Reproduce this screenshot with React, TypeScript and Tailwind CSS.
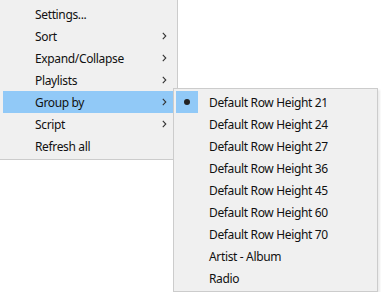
import React from "react";

const Chevron = () => (
  <svg width="5" height="8" viewBox="0 0 5 8" className="block">
    <polyline points="0.8,0.8 3.8,4 0.8,7.2" fill="none" stroke="#333" strokeWidth="1.1" />
  </svg>
);

const mainItems: { label: string; sub?: boolean; active?: boolean }[] = [
  { label: "Settings..." },
  { label: "Sort", sub: true },
  { label: "Expand/Collapse", sub: true },
  { label: "Playlists", sub: true },
  { label: "Group by", sub: true, active: true },
  { label: "Script", sub: true },
  { label: "Refresh all" },
];

const subItems = [
  "Default Row Height 21",
  "Default Row Height 24",
  "Default Row Height 27",
  "Default Row Height 36",
  "Default Row Height 45",
  "Default Row Height 60",
  "Default Row Height 70",
  "Artist - Album",
  "Radio",
];

export default function App() {
  return (
    <div
      className="relative w-[381px] h-[292px] bg-white overflow-hidden text-[12px] tracking-[-0.35px] text-[#111]"
      style={{ fontFamily: '"Segoe UI", "Noto Sans", sans-serif' }}
    >
      <div className="w-[178px] h-[160px] bg-[#f0f0f0] border-r border-b border-[#cccccc] pt-[3px] pl-[3px] pr-[2px] pb-[2px]">
        {mainItems.map((it) => (
          <div
            key={it.label}
            className={`h-[22px] flex items-center pl-[32px] pr-[8px] ${it.active ? "bg-[#91c9f7]" : ""}`}
          >
            <span className="flex-1 leading-none pt-[1px]">{it.label}</span>
            {it.sub && <Chevron />}
          </div>
        ))}
      </div>
      <div className="absolute left-[173px] top-[88px] w-[205px] h-[204px] bg-[#f0f0f0] border border-[#cccccc] pt-[2px] px-[2px] pb-[2px] shadow-[2px_2px_2px_rgba(0,0,0,0.08)]">
        {subItems.map((s, i) => (
          <div key={s} className="h-[22px] flex items-center">
            <div className={`w-[22px] h-[22px] flex items-center justify-center ${i === 0 ? "bg-[#91c9f7]" : ""}`}>
              {i === 0 && <div className="w-[6px] h-[6px] rounded-full bg-[#222]" />}
            </div>
            <span className="pl-[11px] leading-none pt-[1px]">{s}</span>
          </div>
        ))}
      </div>
    </div>
  );
}
